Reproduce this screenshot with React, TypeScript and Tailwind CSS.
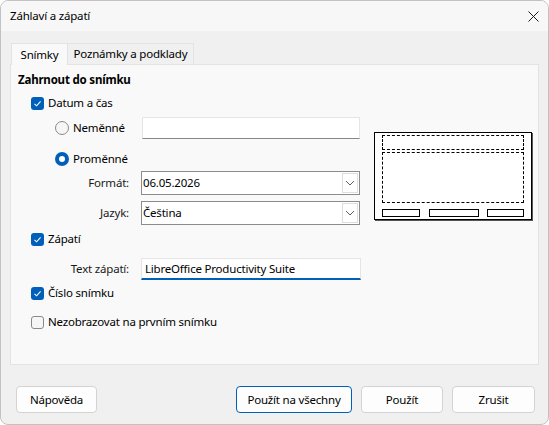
import type { ReactNode } from "react";

const FONT = { fontFamily: '"Noto Sans", "Open Sans", sans-serif' };

function CheckBox({ checked }: { checked: boolean }) {
  if (!checked) {
    return <span className="block w-[13px] h-[13px] rounded-[3px] border border-[#8a8a8a] bg-[#f6f6f6]" />;
  }
  return (
    <span className="flex w-[13px] h-[13px] rounded-[3px] bg-[#005fb8] items-center justify-center">
      <svg width="9" height="9" viewBox="0 0 9 9">
        <path d="M1.5 4.8 L3.6 6.8 L7.6 2.4" fill="none" stroke="#fff" strokeWidth="1.1" />
      </svg>
    </span>
  );
}

function Radio({ checked }: { checked: boolean }) {
  if (!checked) {
    return <span className="block w-[14px] h-[14px] rounded-full border border-[#8a8a8a] bg-[#f6f6f6]" />;
  }
  return (
    <span className="flex w-[14px] h-[14px] rounded-full bg-[#005fb8] items-center justify-center">
      <span className="block w-[6px] h-[6px] rounded-full bg-white" />
    </span>
  );
}

function Chevron() {
  return (
    <svg width="10" height="6" viewBox="0 0 10 6">
      <path d="M1 1 L5 5 L9 1" fill="none" stroke="#5f5f5f" strokeWidth="1" />
    </svg>
  );
}

function Select({ value }: { value: string }) {
  return (
    <div className="flex w-[219px] h-[24px] bg-white border border-[#8c8c8c]">
      <span className="flex-1 flex items-center pl-[1px] text-black">{value}</span>
      <span className="flex w-[16px] m-[1px] border border-[#dedede] items-center justify-center">
        <Chevron />
      </span>
    </div>
  );
}

function Label({ children }: { children: ReactNode }) {
  return <span className="w-[111px] text-right text-[#1a1a1a]">{children}</span>;
}

function Button({ children, primary, width }: { children: ReactNode; primary?: boolean; width: string }) {
  return (
    <button
      className={`${width} h-[27px] rounded-[4px] bg-[#fdfdfd] text-black border ${
        primary ? "border-[#005fb8]" : "border-[#d3d3d3]"
      }`}
    >
      {children}
    </button>
  );
}

function SlidePreview() {
  return (
    <div className="w-[158px] h-[88px] bg-white border-[1.5px] border-black shadow-[1px_1px_0_#555] flex flex-col px-[7px] pt-[2px] pb-[2px]">
      <div className="h-[16px] border border-dashed border-black" />
      <div className="h-[53px] mt-[2px] border border-dashed border-black" />
      <div className="flex justify-between mt-[6px]">
        <div className="w-[38px] h-[8px] border border-black" />
        <div className="w-[50px] h-[8px] border border-black" />
        <div className="w-[37px] h-[8px] border border-black" />
      </div>
    </div>
  );
}

export default function App() {
  return (
    <div
      className="w-[549px] h-[425px] flex flex-col bg-[#f0f0f0] rounded-[8px] border border-[#c2c2c2] overflow-hidden text-black text-[11.5px] tracking-[-0.2px]"
      style={FONT}
    >
      {/* title bar */}
      <div className="h-[30px] shrink-0 flex items-center justify-between pl-[9px] pr-[9px] bg-[#f7f7f7]">
        <span>Záhlaví a zápatí</span>
        <svg width="11" height="11" viewBox="0 0 11 11">
          <path d="M0.5 0.5 L10.5 10.5 M10.5 0.5 L0.5 10.5" stroke="#1a1a1a" strokeWidth="1" />
        </svg>
      </div>

      <div className="flex flex-col px-[9px] pt-[12px]">
        {/* tabs */}
        <div className="flex h-[21px] pl-[1px]">
          <div className="w-[57px] flex items-center justify-center bg-[#f9f9f9] border border-b-0 border-[#e3e3e3] -mb-[1px] relative z-10">
            Snímky
          </div>
          <div className="w-[126px] flex items-center justify-center bg-[#f0f0f0] border border-l-0 border-b-0 border-[#e3e3e3]">
            Poznámky a podklady
          </div>
        </div>

        {/* page */}
        <div className="h-[301px] bg-[#f9f9f9] border border-[#e3e3e3] flex pl-[7px]">
          <div className="w-[352px] flex flex-col">
            <div className="h-[20px] mt-[5px] flex items-center font-bold">Zahrnout do snímku</div>
            <div className="h-[26px] flex items-center pl-[13px] gap-[4px]">
              <CheckBox checked />
              <span>Datum a čas</span>
            </div>
            <div className="h-[24px] flex items-center pl-[37px]">
              <Radio checked={false} />
              <span className="ml-[4px] w-[69px]">Neměnné</span>
              <div className="w-[218px] h-[22px] bg-white border border-[#e5e5e5] border-b-[#868686]" />
            </div>
            <div className="h-[24px] mt-[7px] flex items-center pl-[37px]">
              <Radio checked />
              <span className="ml-[4px]">Proměnné</span>
            </div>
            <div className="h-[24px] flex items-center gap-[12px]">
              <Label>Formát:</Label>
              <Select value="06.05.2026" />
            </div>
            <div className="h-[24px] mt-[6px] flex items-center gap-[12px]">
              <Label>Jazyk:</Label>
              <Select value="Čeština" />
            </div>
            <div className="h-[24px] mt-[2px] flex items-center pl-[13px] gap-[4px]">
              <CheckBox checked />
              <span>Zápatí</span>
            </div>
            <div className="h-[22px] mt-[7px] flex items-center gap-[12px]">
              <Label>Text zápatí:</Label>
              <div className="w-[220px] h-[22px] flex items-center pl-[3px] bg-white border border-[#e5e5e5] border-b-[2px] border-b-[#005fb8]">
                LibreOffice Productivity Suite
              </div>
            </div>
            <div className="h-[22px] mt-[2px] flex items-center pl-[13px] gap-[4px]">
              <CheckBox checked />
              <span>Číslo snímku</span>
            </div>
            <div className="h-[22px] mt-[7px] flex items-center pl-[13px] gap-[4px]">
              <CheckBox checked={false} />
              <span>Nezobrazovat na prvním snímku</span>
            </div>
          </div>
          <div className="ml-[4px] mt-[67px]">
            <SlidePreview />
          </div>
        </div>

        {/* buttons */}
        <div className="flex mt-[21px] pl-[6px]">
          <Button width="w-[81px]">Nápověda</Button>
          <div className="flex-1" />
          <div className="flex gap-[9px] pr-[4px]">
            <Button primary width="w-[116px]">Použít na všechny</Button>
            <Button width="w-[82px]">Použít</Button>
            <Button width="w-[83px]">Zrušit</Button>
          </div>
        </div>
      </div>
    </div>
  );
}
